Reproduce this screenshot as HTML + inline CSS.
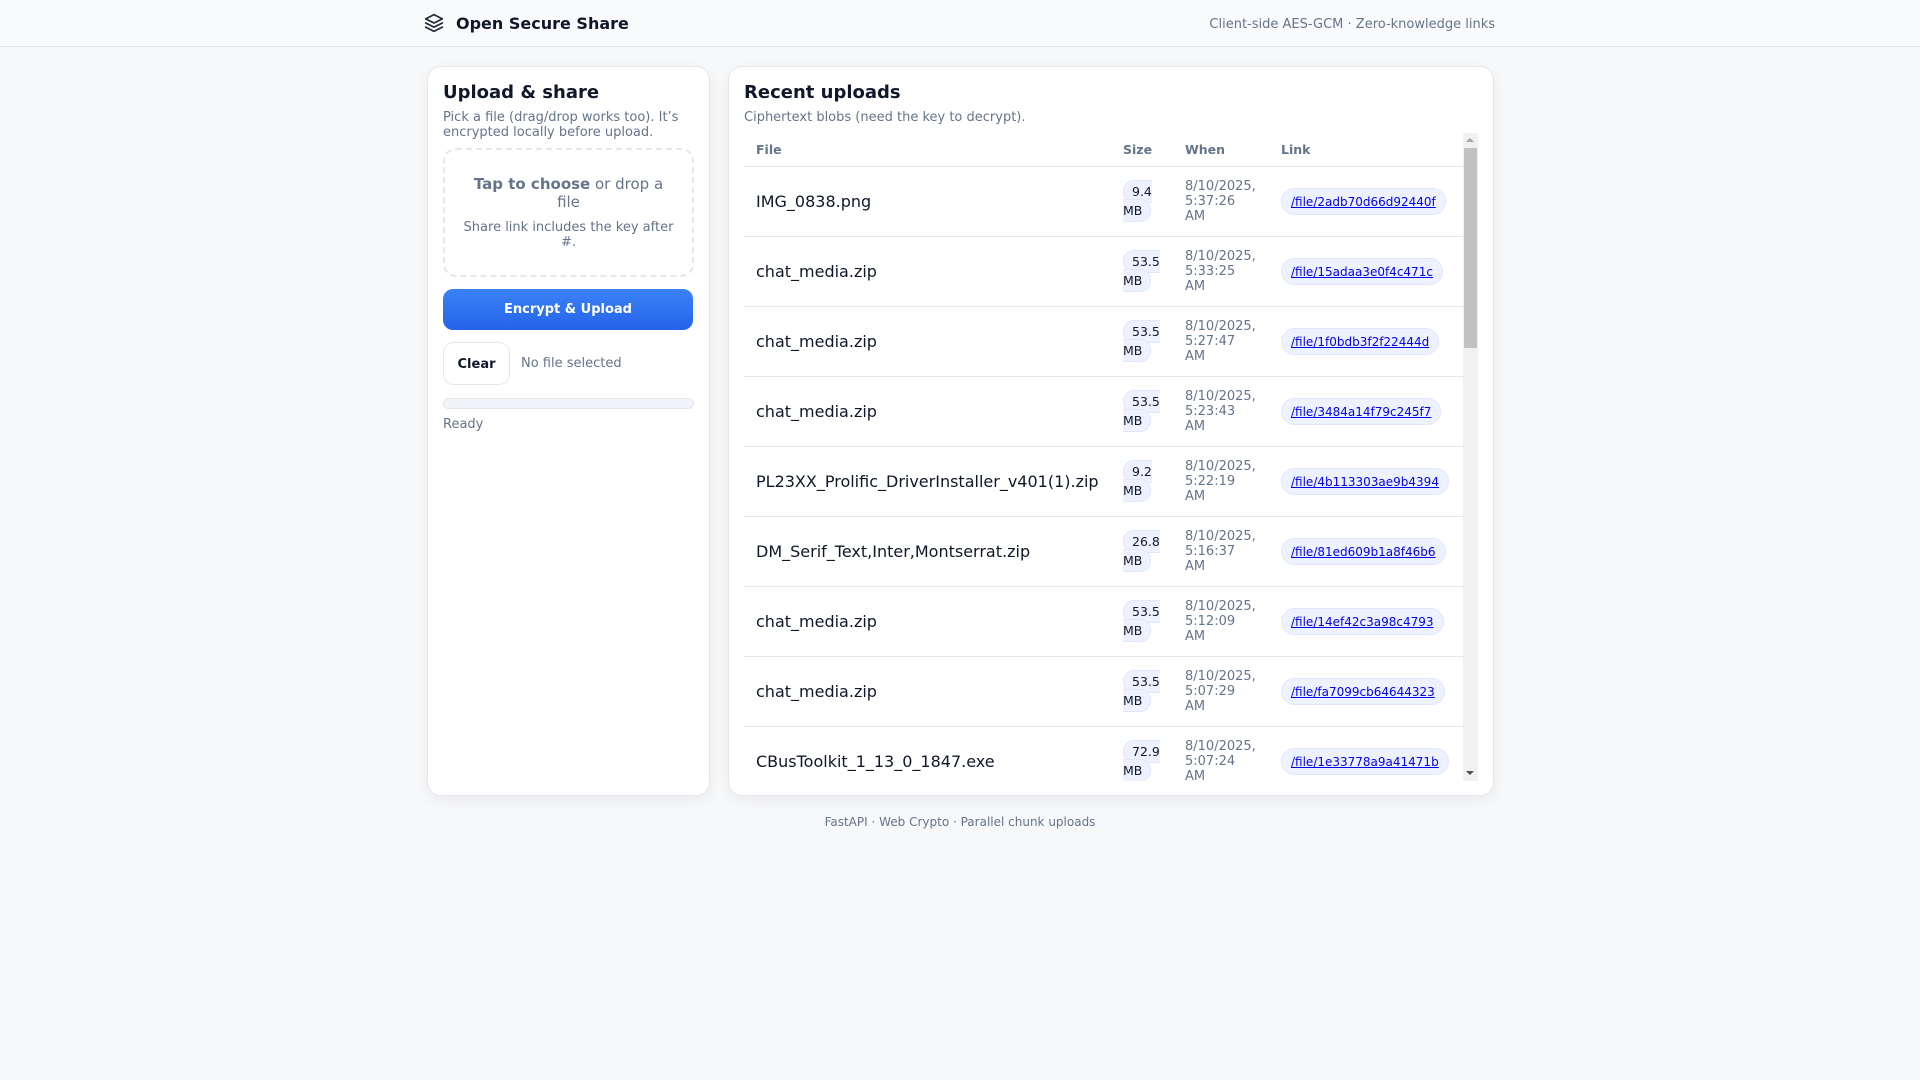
<!DOCTYPE html>
<html><head><meta charset="utf-8"><style>
*{box-sizing:border-box;margin:0;padding:0}
body{width:1920px;height:1080px;background:#f7f8fa;font-family:"DejaVu Sans","Liberation Sans",sans-serif;color:#0f172a;position:relative;overflow:hidden}
.top{position:absolute;left:0;top:0;width:1920px;height:47px;background:#f9fafb;border-bottom:1px solid #e5e7eb}
.logo{position:absolute;left:424px;top:13px}
.brand{position:absolute;left:456px;top:14px;font-size:16px;font-weight:bold}
.tag{position:absolute;right:425px;top:17px;font-size:13px;color:#64748b}
.card{position:absolute;background:#fff;border:1px solid #e5e7eb;border-radius:14px;box-shadow:0 4px 14px rgba(15,23,42,.06)}
h2{font-size:18px;font-weight:bold;position:absolute;white-space:nowrap}
.sub{position:absolute;font-size:13px;color:#64748b;line-height:15px}
.drop{position:absolute;left:15px;top:81px;width:251px;height:129px;border:2px dashed #e2e8f0;border-radius:13px;text-align:center;color:#64748b}
.btn{position:absolute;left:15px;top:222px;width:250px;height:41px;border-radius:10px;background:linear-gradient(#3b82f6,#2563eb);color:#fff;font-weight:bold;font-size:13px;text-align:center;line-height:41px}
.clear{position:absolute;left:15px;top:275px;width:67px;height:43px;border:1px solid #e5e7eb;border-radius:11px;font-weight:bold;font-size:13px;text-align:center;line-height:43px}
table{border-collapse:collapse;table-layout:fixed;width:719px}
th{height:33px;text-align:left;font-size:12.5px;color:#64748b;padding:0 12px;border-bottom:1px solid #e5e7eb}
td{height:70px;padding:0 12px;border-bottom:1px solid #e5e7eb;vertical-align:middle}
td.f{font-size:16px}
td.s{font-size:12.5px;line-height:19px}
td.s span{background:#eef2ff;border:1px solid #e0e7ff;padding:3px 8px;border-radius:11px}
td.w{font-size:13px;color:#64748b;line-height:15px}
td.l a{display:inline-block;font-size:12px;color:#0000ee;text-decoration:underline;background:#eef2ff;border:1px solid #e0e7ff;border-radius:14px;padding:0 9px;height:27px;line-height:27px;white-space:nowrap}
</style></head><body>
<div class="top">
<svg class="logo" width="20" height="20" viewBox="0 0 24 24" fill="none" stroke="#1f2937" stroke-width="2" stroke-linecap="round" stroke-linejoin="round"><path d="M12 2 2 7l10 5 10-5-10-5z"/><path d="m2 17 10 5 10-5"/><path d="m2 12 10 5 10-5"/></svg>
<div class="brand">Open Secure Share</div>
<div class="tag">Client-side AES-GCM · Zero-knowledge links</div>
</div>

<div class="card" style="left:427px;top:66px;width:283px;height:730px">
<h2 style="left:15px;top:15px">Upload &amp; share</h2>
<div class="sub" style="left:15px;top:43px;width:255px">Pick a file (drag/drop works too). It’s encrypted locally before upload.</div>
<div class="drop">
<div style="margin-top:25px;font-size:15px;line-height:18px;padding:0 24px"><b>Tap to choose</b> or drop a file</div>
<div style="margin-top:9px;font-size:13px;line-height:15px;padding:0 18px">Share link includes the key after #.</div>
</div>
<div class="btn">Encrypt &amp; Upload</div>
<div class="clear">Clear</div>
<div style="position:absolute;left:93px;top:289px;font-size:13px;color:#64748b">No file selected</div>
<div style="position:absolute;left:15px;top:331px;width:251px;height:11px;border:1px solid #e5e7eb;background:#f1f5f9;border-radius:6px"></div>
<div style="position:absolute;left:15px;top:350px;font-size:13px;color:#64748b">Ready</div>
</div>

<div class="card" style="left:728px;top:66px;width:766px;height:730px">
<h2 style="left:15px;top:15px">Recent uploads</h2>
<div class="sub" style="left:15px;top:43px">Ciphertext blobs (need the key to decrypt).</div>
<div style="position:absolute;left:15px;top:66px;width:719px;height:648px;overflow:hidden">
<table>
<colgroup><col style="width:367px"><col style="width:62px"><col style="width:96px"><col style="width:194px"></colgroup>
<tr><th>File</th><th>Size</th><th>When</th><th>Link</th></tr>
<tr><td class="f">IMG_0838.png</td><td class="s"><span>9.4 MB</span></td><td class="w">8/10/2025, 5:37:26 AM</td><td class="l"><a>/file/2adb70d66d92440f</a></td></tr>
<tr><td class="f">chat_media.zip</td><td class="s"><span>53.5 MB</span></td><td class="w">8/10/2025, 5:33:25 AM</td><td class="l"><a>/file/15adaa3e0f4c471c</a></td></tr>
<tr><td class="f">chat_media.zip</td><td class="s"><span>53.5 MB</span></td><td class="w">8/10/2025, 5:27:47 AM</td><td class="l"><a>/file/1f0bdb3f2f22444d</a></td></tr>
<tr><td class="f">chat_media.zip</td><td class="s"><span>53.5 MB</span></td><td class="w">8/10/2025, 5:23:43 AM</td><td class="l"><a>/file/3484a14f79c245f7</a></td></tr>
<tr><td class="f">PL23XX_Prolific_DriverInstaller_v401(1).zip</td><td class="s"><span>9.2 MB</span></td><td class="w">8/10/2025, 5:22:19 AM</td><td class="l"><a>/file/4b113303ae9b4394</a></td></tr>
<tr><td class="f">DM_Serif_Text,Inter,Montserrat.zip</td><td class="s"><span>26.8 MB</span></td><td class="w">8/10/2025, 5:16:37 AM</td><td class="l"><a>/file/81ed609b1a8f46b6</a></td></tr>
<tr><td class="f">chat_media.zip</td><td class="s"><span>53.5 MB</span></td><td class="w">8/10/2025, 5:12:09 AM</td><td class="l"><a>/file/14ef42c3a98c4793</a></td></tr>
<tr><td class="f">chat_media.zip</td><td class="s"><span>53.5 MB</span></td><td class="w">8/10/2025, 5:07:29 AM</td><td class="l"><a>/file/fa7099cb64644323</a></td></tr>
<tr><td class="f">CBusToolkit_1_13_0_1847.exe</td><td class="s"><span>72.9 MB</span></td><td class="w">8/10/2025, 5:07:24 AM</td><td class="l"><a>/file/1e33778a9a41471b</a></td></tr>
</table>
</div>
<div style="position:absolute;left:734px;top:66px;width:15px;height:648px;background:#f1f1f1">
<div style="position:absolute;left:3px;top:5px;width:0;height:0;border-left:4px solid transparent;border-right:4px solid transparent;border-bottom:4px solid #a3a3a3"></div>
<div style="position:absolute;left:1px;top:15px;width:13px;height:200px;background:#c1c1c1"></div>
<div style="position:absolute;left:3px;top:638px;width:0;height:0;border-left:4px solid transparent;border-right:4px solid transparent;border-top:4px solid #505050"></div>
</div>
</div>

<div style="position:absolute;left:0;width:1920px;top:815px;text-align:center;font-size:12px;color:#64748b">FastAPI · Web Crypto · Parallel chunk uploads</div>
</body></html>
